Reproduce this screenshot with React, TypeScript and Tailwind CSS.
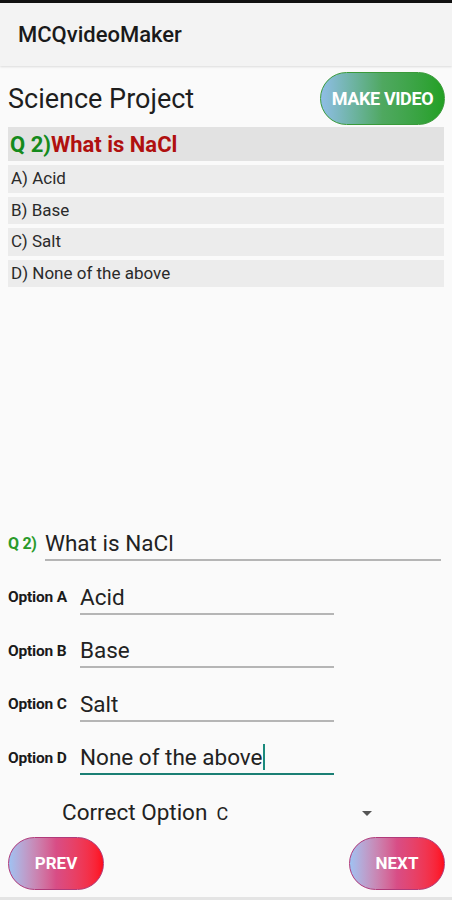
import React from "react";

const font = { fontFamily: "Roboto, 'Liberation Sans', sans-serif" };

function Field({ label, value, labelClass, inputWidth, focused }: { label: string; value: string; labelClass: string; inputWidth: string; focused?: boolean }) {
  return (
    <div className="flex items-end h-[53.5px] pl-[8px]">
      <div className={labelClass}>{label}</div>
      <div className={`${inputWidth} flex flex-col`}>
        <div className="text-[22.5px] leading-[26px] text-[#222] pb-[3px] flex items-center">
          {value}
          {focused && <span className="inline-block w-[2px] h-[26px] bg-[#1a8a7c] ml-[0px]" />}
        </div>
        <div className={focused ? "h-[2px] bg-[#1a7f74]" : "h-[2px] bg-[#b5b5b5]"} />
      </div>
    </div>
  );
}

const labelCls = "text-[15.5px] font-bold text-[#1a1a1a] w-[72px] pb-[5px] tracking-[-0.2px]";

export default function App() {
  return (
    <div className="w-[452px] h-[900px] bg-[#fafafa] flex flex-col overflow-hidden" style={font}>
      <div className="h-[3px] bg-[#111]" />
      <div className="h-[63px] bg-[#f3f3f3] flex items-center pl-[18px] shadow-[0_1px_2px_rgba(0,0,0,0.12)] z-10">
        <span className="text-[22px] font-medium text-[#1a1a1a]">MCQvideoMaker</span>
      </div>
      <div className="flex items-center justify-between pl-[8px] pr-[7px] mt-[6px] h-[53px]">
        <span className="text-[27px] text-[#1e1e1e] pt-[1px]">Science Project</span>
        <div className="w-[125px] h-[53px] rounded-full border border-[#3a9a3a] bg-gradient-to-r from-[#8fbde6] via-[#4fa860] to-[#22a022] flex items-center justify-center">
          <span className="text-white font-bold text-[18px] tracking-[-0.4px]">MAKE VIDEO</span>
        </div>
      </div>
      <div className="mx-[8px] mt-[2px] h-[34px] bg-[#e2e2e2] flex items-center pl-[2px]">
        <span className="text-[22px] font-bold text-[#158a1c]">Q 2)</span>
        <span className="text-[22px] font-bold text-[#b0100f]">What is NaCl</span>
      </div>
      <div className="flex flex-col gap-[4px] mx-[8px] mr-[8px] mt-[4px]">
        {["A) Acid", "B) Base", "C) Salt", "D) None of the above"].map((t) => (
          <div key={t} className="h-[27.5px] bg-[#ececec] flex items-center pl-[3px] text-[17px] text-[#2a2a2a]">{t}</div>
        ))}
      </div>
      <div className="flex-1" />
      <div className="flex flex-col mb-[7px]">
        <div className="flex items-end h-[45px] pl-[8px]">
          <div className="text-[16px] font-bold text-[#2a9a2a] w-[37px] pb-[5px] tracking-[-0.3px]">Q 2)</div>
          <div className="w-[396px] flex flex-col">
            <div className="text-[22.5px] leading-[26px] text-[#222] pb-[3px]">What is NaCl</div>
            <div className="h-[2px] bg-[#b5b5b5]" />
          </div>
        </div>
        <Field label="Option A" value="Acid" labelClass={labelCls} inputWidth="w-[254px]" />
        <Field label="Option B" value="Base" labelClass={labelCls} inputWidth="w-[254px]" />
        <Field label="Option C" value="Salt" labelClass={labelCls} inputWidth="w-[254px]" />
        <Field label="Option D" value="None of the above" labelClass={labelCls} inputWidth="w-[254px]" focused />
      </div>
      <div className="flex items-center h-[48px] mt-[7px] pl-[62px] pr-[80px]">
        <span className="text-[22.5px] text-[#222]">Correct Option</span>
        <span className="text-[18px] text-[#222] ml-[9px]">C</span>
        <div className="flex-1" />
        <div className="w-0 h-0 border-l-[5px] border-r-[5px] border-t-[5px] border-l-transparent border-r-transparent border-t-[#555]" />
      </div>
      <div className="flex justify-between pl-[8px] pr-[7px] mb-[7px]">
        <div className="w-[96px] h-[53px] rounded-full border border-[#b03a7a] bg-gradient-to-r from-[#9ec2f2] via-[#d84d86] to-[#ff0a1a] flex items-center justify-center">
          <span className="text-white font-bold text-[17px]">PREV</span>
        </div>
        <div className="w-[96px] h-[53px] rounded-full border border-[#b03a7a] bg-gradient-to-r from-[#9ec2f2] via-[#d84d86] to-[#ff0a1a] flex items-center justify-center">
          <span className="text-white font-bold text-[17px]">NEXT</span>
        </div>
      </div>
      <div className="h-[3px] bg-[#e4e4e4]" />
    </div>
  );
}
